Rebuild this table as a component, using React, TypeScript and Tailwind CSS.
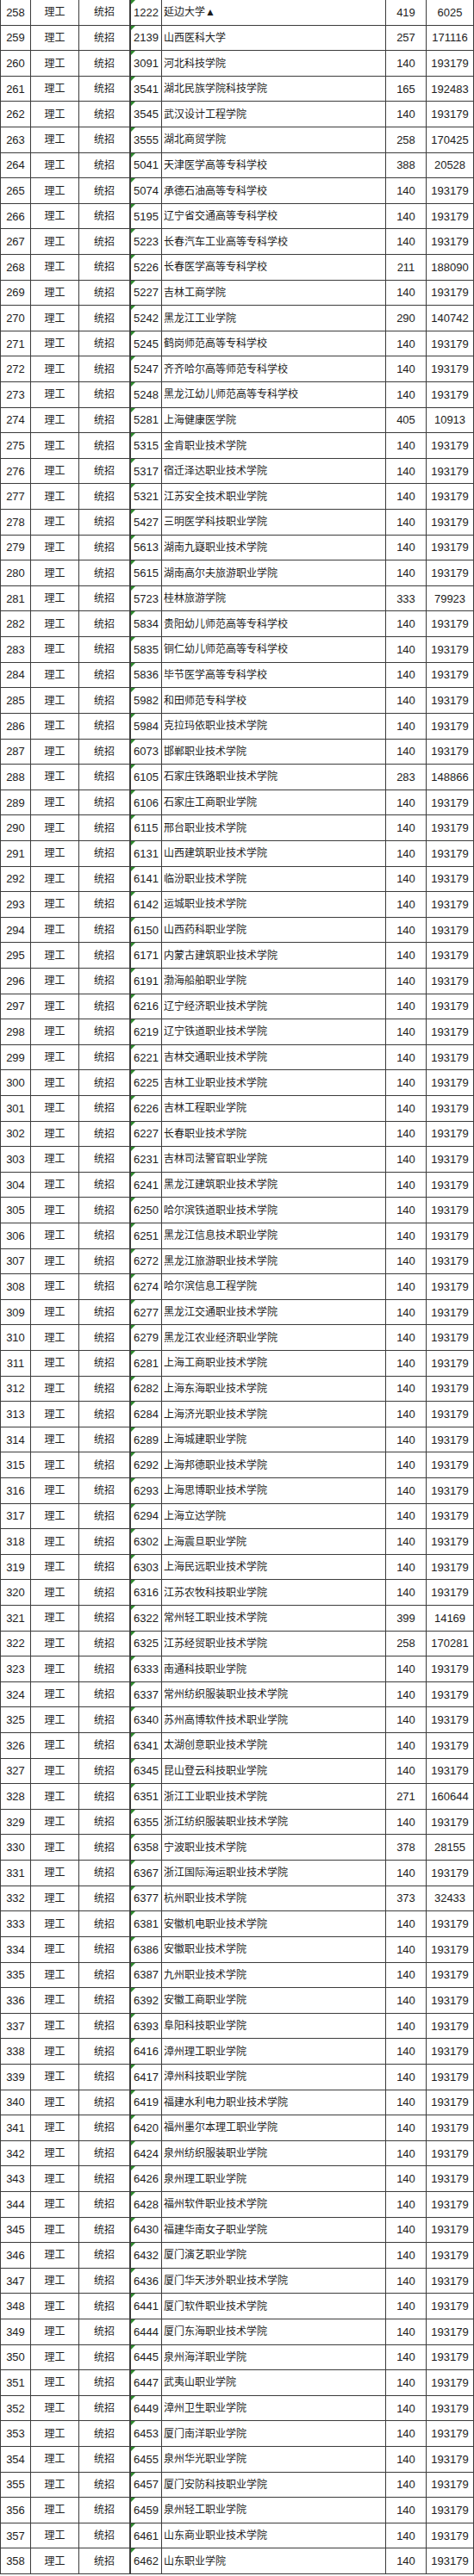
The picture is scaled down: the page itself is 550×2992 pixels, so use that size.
const raw = `1222 延边大学▲ 419 6025
2139 山西医科大学 257 171116
3091 河北科技学院
3541 湖北民族学院科技学院 165 192483
3545 武汉设计工程学院
3555 湖北商贸学院 258 170425
5041 天津医学高等专科学校 388 20528
5074 承德石油高等专科学校
5195 辽宁省交通高等专科学校
5223 长春汽车工业高等专科学校
5226 长春医学高等专科学校 211 188090
5227 吉林工商学院
5242 黑龙江工业学院 290 140742
5245 鹤岗师范高等专科学校
5247 齐齐哈尔高等师范专科学校
5248 黑龙江幼儿师范高等专科学校
5281 上海健康医学院 405 10913
5315 金肯职业技术学院
5317 宿迁泽达职业技术学院
5321 江苏安全技术职业学院
5427 三明医学科技职业学院
5613 湖南九嶷职业技术学院
5615 湖南高尔夫旅游职业学院
5723 桂林旅游学院 333 79923
5834 贵阳幼儿师范高等专科学校
5835 铜仁幼儿师范高等专科学校
5836 毕节医学高等专科学校
5982 和田师范专科学校
5984 克拉玛依职业技术学院
6073 邯郸职业技术学院
6105 石家庄铁路职业技术学院 283 148866
6106 石家庄工商职业学院
6115 邢台职业技术学院
6131 山西建筑职业技术学院
6141 临汾职业技术学院
6142 运城职业技术学院
6150 山西药科职业学院
6171 内蒙古建筑职业技术学院
6191 渤海船舶职业学院
6216 辽宁经济职业技术学院
6219 辽宁铁道职业技术学院
6221 吉林交通职业技术学院
6225 吉林工业职业技术学院
6226 吉林工程职业学院
6227 长春职业技术学院
6231 吉林司法警官职业学院
6241 黑龙江建筑职业技术学院
6250 哈尔滨铁道职业技术学院
6251 黑龙江信息技术职业学院
6272 黑龙江旅游职业技术学院
6274 哈尔滨信息工程学院
6277 黑龙江交通职业技术学院
6279 黑龙江农业经济职业学院
6281 上海工商职业技术学院
6282 上海东海职业技术学院
6284 上海济光职业技术学院
6289 上海城建职业学院
6292 上海邦德职业技术学院
6293 上海思博职业技术学院
6294 上海立达学院
6302 上海震旦职业学院
6303 上海民远职业技术学院
6316 江苏农牧科技职业学院
6322 常州轻工职业技术学院 399 14169
6325 江苏经贸职业技术学院 258 170281
6333 南通科技职业学院
6337 常州纺织服装职业技术学院
6340 苏州高博软件技术职业学院
6341 太湖创意职业技术学院
6345 昆山登云科技职业学院
6351 浙江工业职业技术学院 271 160644
6355 浙江纺织服装职业技术学院
6358 宁波职业技术学院 378 28155
6367 浙江国际海运职业技术学院
6377 杭州职业技术学院 373 32433
6381 安徽机电职业技术学院
6386 安徽职业技术学院
6387 九州职业技术学院
6392 安徽工商职业学院
6393 阜阳科技职业学院
6416 漳州理工职业学院
6417 漳州科技职业学院
6419 福建水利电力职业技术学院
6420 福州墨尔本理工职业学院
6424 泉州纺织服装职业学院
6426 泉州理工职业学院
6428 福州软件职业技术学院
6430 福建华南女子职业学院
6432 厦门演艺职业学院
6436 厦门华天涉外职业技术学院
6441 厦门软件职业技术学院
6444 厦门东海职业技术学院
6445 泉州海洋职业学院
6447 武夷山职业学院
6449 漳州卫生职业学院
6453 厦门南洋职业学院
6455 泉州华光职业学院
6457 厦门安防科技职业学院
6459 泉州轻工职业学院
6461 山东商业职业技术学院
6462 山东职业学院`;

const rows = raw.split("\n").map((line, i) => {
  const [code, name, score = "140", rank = "193179"] = line.trim().split(" ");
  return { no: 258 + i, code, name, score, rank };
});

const cell = "flex items-center border-r border-b border-[#3c3c3c] overflow-hidden whitespace-nowrap";

export default function App() {
  return (
    <div
      className="w-[550px] bg-white text-[#1c1c1c] text-[13px] leading-none"
      style={{ fontFamily: '"Liberation Sans Narrow", "Liberation Sans", "Noto Sans CJK SC", sans-serif' }}
    >
      <div className="h-[2990px] grid grid-rows-[repeat(101,minmax(0,1fr))] border-l border-[#3c3c3c]">
        {rows.map((r) => (
          <div
            key={r.no}
            className="grid grid-cols-[35px_56px_60px_36px_260px_47px_1fr]"
          >
            <div className={`${cell} justify-center`}>{r.no}</div>
            <div className={`${cell} justify-center text-[12px]`}>理工</div>
            <div className={`${cell} justify-center text-[12px] border-r-2`}>统招</div>
            <div className={`${cell} relative justify-center`}>
              <span className="absolute left-0 top-0 w-0 h-0 border-t-[5px] border-r-[5px] border-t-[#2e8b2e] border-r-transparent" />
              {r.code}
            </div>
            <div className={`${cell} pl-[2px] text-[12px]`}>{r.name}</div>
            <div className={`${cell} justify-center`}>{r.score}</div>
            <div className={`${cell} justify-center`}>{r.rank}</div>
          </div>
        ))}
      </div>
    </div>
  );
}
